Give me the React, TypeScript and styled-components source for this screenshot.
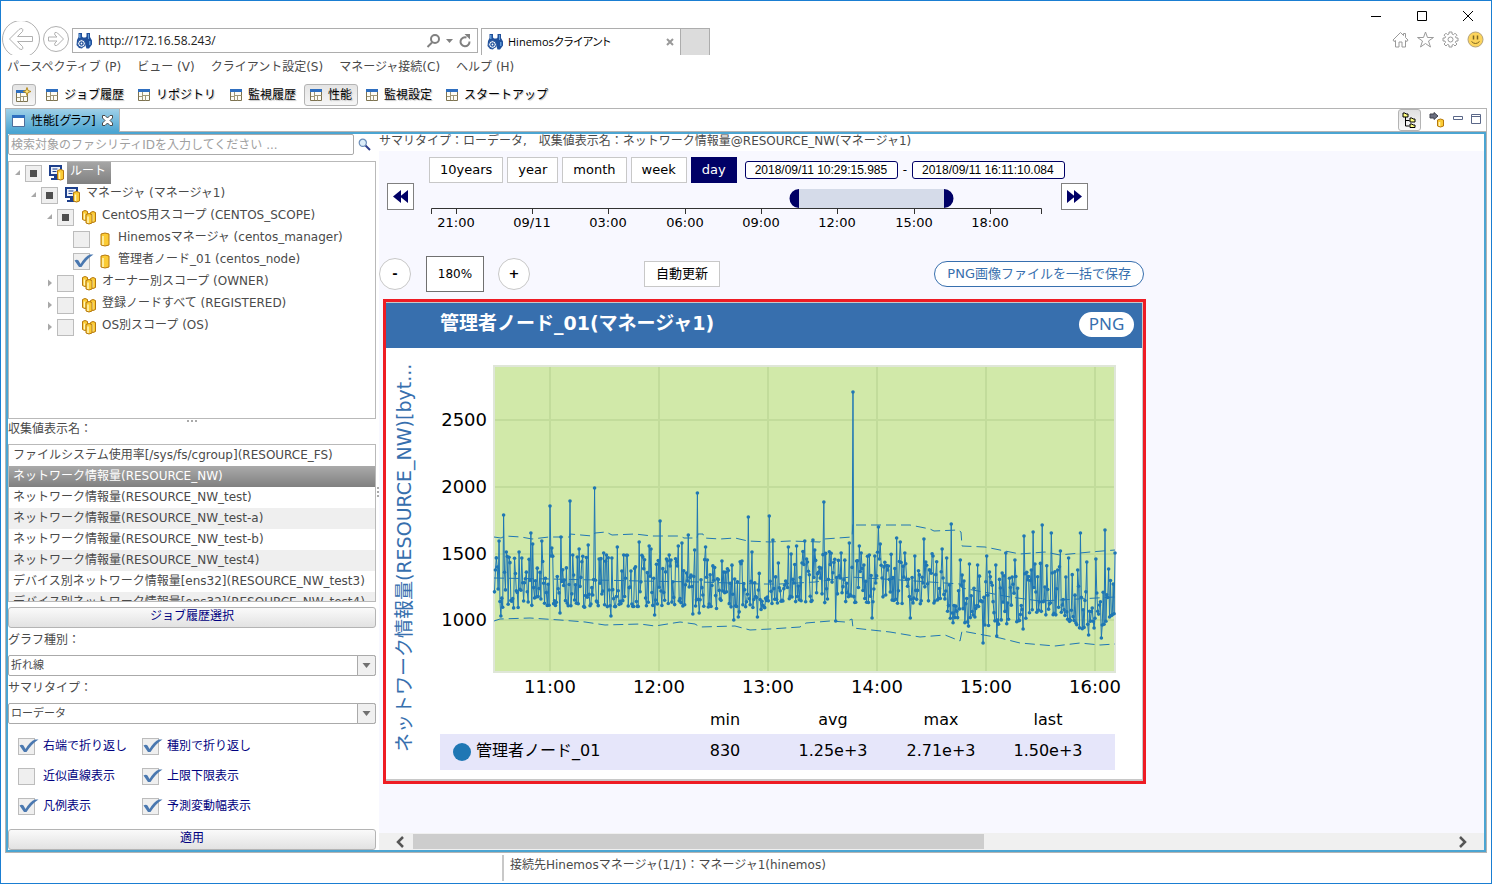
import React from "react";
import styled, { createGlobalStyle, css } from "styled-components";

const uiFont = `"DejaVu Sans", "Noto Sans CJK JP", sans-serif`;

const GlobalStyle = createGlobalStyle`
  *, *::before, *::after { box-sizing: border-box; }
  body { margin: 0; background: #fff; }
  button, input, select { font: inherit; color: inherit; margin: 0; }
  button { cursor: pointer; }
`;

const Window = styled.div`
  display: flex;
  flex-direction: column;
  min-height: 100vh;
  border: 1px solid #1a7ed2;
  background: #fff;
  font: 12px/18px ${uiFont};
  color: #4a4a4a;
`;

/* ---------- browser chrome ---------- */

const Chrome = styled.header`
  display: flex;
  justify-content: space-between;
  height: 54px;
`;

const ChromeLeft = styled.div`
  display: flex;
  align-items: flex-end;
  padding: 20px 0 0 1px;
`;

const NavButton = styled.button`
  display: block;
  padding: 0;
  border: 0;
  background: none;
  svg { display: block; }
`;

const AddressBar = styled.div`
  display: flex;
  align-items: center;
  gap: 5px;
  width: 406px;
  height: 25px;
  margin: 0 3px 2px;
  padding: 0 5px 0 3px;
  border: 1px solid #adadad;
`;

const AddressInput = styled.input`
  flex: 1;
  min-width: 0;
  padding: 0;
  border: 0;
  outline: 0;
  background: none;
  font: 12px/18px "Open Sans", sans-serif;
  color: #222;
`;

const BrowserTab = styled.div`
  display: flex;
  align-items: center;
  gap: 4px;
  width: 200px;
  height: 27px;
  padding: 0 6px 0 5px;
  border: 1px solid #adadad;
  border-bottom: 0;
  font: 11px/18px "Open Sans", "Noto Sans CJK JP", sans-serif;
  font-feature-settings: "palt";
  color: #000;
  span { flex: 1; white-space: nowrap; }
`;

const NewTab = styled.button`
  width: 30px;
  height: 27px;
  margin-left: -1px;
  border: 1px solid #adadad;
  border-bottom: 0;
  background: #dcdcdc;
`;

const ChromeRight = styled.div`
  display: flex;
  flex-direction: column;
  align-items: flex-end;
`;

const WindowButtons = styled.div`
  display: flex;
  gap: 34px;
  padding: 9px 17px 0 0;
`;

const ChromeIcons = styled.div`
  display: flex;
  gap: 8px;
  margin-top: 9px;
  padding-right: 7px;
`;

const BareButton = styled.button`
  display: flex;
  padding: 0;
  border: 0;
  background: none;
`;

/* ---------- menus ---------- */

const MenuBar = styled.nav`
  display: flex;
  gap: 16px;
  height: 24px;
  padding: 3px 6px 0;
  a { color: #4a4a4a; text-decoration: none; white-space: nowrap; }
`;

const Toolbar = styled.div`
  display: flex;
  gap: 2px;
  height: 29px;
  padding: 5px 11px 2px;
`;

const ToolButton = styled.button<{ $on?: boolean; $solo?: boolean }>`
  display: flex;
  align-items: center;
  gap: 6px;
  padding: 0 5px;
  border: 1px solid transparent;
  border-radius: 3px;
  background: none;
  color: #000;
  text-shadow: 1px 1px 1px #bbb;
  white-space: nowrap;
  ${(p) => p.$on && css`border-color: #b4b4b4; background: linear-gradient(#e4e4e4, #f6f6f6);`}
  ${(p) => p.$solo && css`width: 24px; padding: 0 3px; margin-right: 2px;`}
`;

/* ---------- part stack ---------- */

const PartStack = styled.main`
  flex: 1;
  display: flex;
  flex-direction: column;
  margin: 0 4px;
  border: 1px solid #b4b4b4;
`;

const PartTabs = styled.div`
  display: flex;
  justify-content: space-between;
  height: 23px;
  border-bottom: 1px solid #b4b4b4;
`;

const PartTab = styled.div`
  display: flex;
  align-items: center;
  gap: 6px;
  height: 23px;
  padding: 0 6px;
  border-right: 1px solid #b4b4b4;
  background: linear-gradient(#9fd0e8, #4ba5d2);
  color: #000;
  font-feature-settings: "palt";
  span { white-space: nowrap; }
`;

const PartTools = styled.div`
  display: flex;
  align-items: center;
  gap: 8px;
  padding-right: 5px;
`;

const PartTool = styled(BareButton)<{ $on?: boolean }>`
  ${(p) => p.$on && css`
    padding: 2px 3px;
    border: 1px solid #b4b4b4;
    border-radius: 3px;
    background: linear-gradient(#e0e0e0, #fafafa);
  `}
`;

const PartBody = styled.div`
  flex: 1;
  display: flex;
  border: 2px solid #4ba5d2;
`;

/* ---------- left column ---------- */

const Side = styled.section`
  flex: none;
  display: flex;
  flex-direction: column;
  width: 368px;
`;

const SearchRow = styled.div`
  display: flex;
  align-items: center;
  gap: 4px;
  margin-bottom: 6px;
`;

const SearchInput = styled.input`
  width: 346px;
  height: 21px;
  padding: 0 2px;
  border: 1px solid #aaa;
  border-radius: 2px;
  outline: 0;
  &::placeholder { color: #a0a0a0; opacity: 1; }
`;

const Tree = styled.ul`
  flex: 1;
  margin: 0;
  padding: 0;
  border: 1px solid #b9b9b9;
  list-style: none;
`;

const TreeRow = styled.li<{ $depth: number }>`
  display: flex;
  align-items: center;
  height: 22px;
  padding-left: ${(p) => p.$depth * 16 + 5}px;
  white-space: nowrap;
`;

const TreeArrow = styled.span`
  display: flex;
  width: 11px;
`;

const TreeIcon = styled.span`
  display: flex;
  width: 16px;
  margin: 0 2px 0 7px;
`;

const TreeLabel = styled.span<{ $selected?: boolean }>`
  height: 22px;
  padding: 0 5px 0 3px;
  line-height: 19px;
  ${(p) => p.$selected && css`background: linear-gradient(#a6a6a6, #808080); color: #fff;`}
`;

const CheckFrame = styled.span`
  position: relative;
  display: flex;
  width: 17px;
  height: 17px;
  flex: none;
  svg { position: absolute; left: 0; top: 0; pointer-events: none; overflow: visible; }
`;

const CheckInput = styled.input`
  appearance: none;
  width: 17px;
  height: 17px;
  border: 1px solid #bcbcbc;
  background: #efefef;
`;

const Dots = styled.div<{ $vertical?: boolean }>`
  display: flex;
  flex-direction: ${(p) => (p.$vertical ? "column" : "row")};
  align-items: center;
  justify-content: center;
  gap: 2px;
  ${(p) => (p.$vertical ? css`width: 3px;` : css`height: 3px;`)}
  i { width: 2px; height: 2px; background: #aaa; }
`;

const FieldLabel = styled.label`
  display: block;
  margin-top: 3px;
  padding-bottom: 6px;
  line-height: 18px;
`;

const ListLabel = styled.div`
  height: 22px;
  line-height: 14px;
`;

const List = styled.ul`
  height: 158px;
  margin: 0 0 5px;
  padding: 0;
  overflow: hidden;
  border: 1px solid #b9b9b9;
  list-style: none;
`;

const ListRow = styled.li<{ $selected?: boolean }>`
  height: 21px;
  padding: 1px 4px;
  line-height: 18px;
  white-space: nowrap;
  &:nth-child(even) { background: #efefef; }
  ${(p) => p.$selected && css`&&& { background: linear-gradient(#aaa, #808080); color: #fff; }`}
`;

const WideButton = styled.button`
  height: 21px;
  padding: 0 0 2px;
  border: 1px solid #b4b4b4;
  border-radius: 3px;
  background: linear-gradient(#fafafa, #e2e2e2);
  color: #000080;
  line-height: 17px;
`;

const SelectFrame = styled.div`
  position: relative;
  display: flex;
  svg {
    position: absolute;
    right: 0;
    top: 0;
    pointer-events: none;
  }
`;

const Select = styled.select`
  appearance: none;
  width: 100%;
  height: 21px;
  padding: 0 20px 0 2px;
  border: 1px solid #aaa;
  border-radius: 2px;
  background: #fff;
  font-size: 11px;
`;

const CheckGrid = styled.div`
  display: grid;
  grid-template-columns: 124px 1fr;
  grid-auto-rows: 30px;
  padding: 7px 0 8px 10px;
`;

const CheckLabel = styled.label`
  display: flex;
  align-items: center;
  gap: 8px;
  color: #000080;
  white-space: nowrap;
`;

const Sash = styled.div`
  display: flex;
  justify-content: center;
  width: 3px;
`;

/* ---------- right column ---------- */

const Content = styled.section`
  flex: 1;
  min-width: 0;
  display: flex;
  flex-direction: column;
`;

const Summary = styled.div`
  height: 17px;
  line-height: 14px;
  white-space: nowrap;
`;

const Canvas = styled.div`
  flex: 1;
  padding-top: 6px;
  background: #f8f8ff;
`;

const RangeRow = styled.div`
  display: flex;
  align-items: center;
  gap: 4px;
  padding-left: 50px;
`;

const BoxButton = styled.button<{ $on?: boolean }>`
  height: 26px;
  padding: 0 10px;
  border: 1px solid ${(p) => (p.$on ? "#000066" : "#c8c8c8")};
  background: ${(p) => (p.$on ? "#000066" : "#fff")};
  color: ${(p) => (p.$on ? "#fff" : "#000")};
  font-size: 13px;
  line-height: 18px;
  white-space: nowrap;
`;

const DateInput = styled.input`
  width: 153px;
  height: 18px;
  padding: 0 9px;
  border: 1px solid #000066;
  border-radius: 3px;
  background: #fff;
  color: #000;
  font: 12px/16px "Liberation Sans", sans-serif;
`;

const DateGroup = styled.div`
  display: flex;
  align-items: center;
  gap: 5px;
  margin-left: 4px;
  color: #000;
`;

const AxisRow = styled.div`
  display: flex;
  align-items: flex-start;
  padding-left: 8px;
`;

const StepButton = styled.button`
  display: flex;
  align-items: center;
  justify-content: center;
  width: 27px;
  height: 27px;
  padding: 0;
  border: 1px solid #808080;
  background: #fff;
`;

const ZoomRow = styled.div`
  display: flex;
  align-items: center;
  max-width: 765px;
  margin-top: 25px;
  color: #000;
`;

const RoundButton = styled.button`
  width: 32px;
  height: 32px;
  padding: 0;
  border: 1px solid #c8c8c8;
  border-radius: 50%;
  background: #fff;
  color: #000;
  font-size: 13px;
  font-weight: bold;
`;

const ZoomValue = styled.output`
  width: 58px;
  margin: 0 14px 0 15px;
  border: 1px solid #707070;
  background: #fff;
  line-height: 34px;
  text-align: center;
`;

const AutoSlot = styled.div`
  flex: 1;
  padding-left: 114px;
`;

const AutoButton = styled(BoxButton)`
  padding: 0 11px;
`;

const SaveButton = styled(BoxButton)`
  padding: 0 12px;
  border-color: #376fae;
  border-radius: 13px;
  color: #376fae;
`;

const Card = styled.article`
  max-width: 763px;
  margin: 7px 0 0 4px;
  border: 3px solid #ee1c24;
`;

const CardInner = styled.div`
  border: solid #c8c8c8;
  border-width: 1px 1px 2px 0;
  background: #fff;
`;

const CardHead = styled.header`
  display: flex;
  align-items: center;
  justify-content: space-between;
  height: 45px;
  padding: 0 8px 2px 54px;
  background: #376fae;
  color: #fff;
`;

const CardTitle = styled.h2`
  margin: 0;
  padding-bottom: 4px;
  font-size: 19px;
  line-height: 24px;
`;

const PngButton = styled.button`
  width: 55px;
  height: 25px;
  padding: 0 0 2px;
  border: 0;
  border-radius: 13px;
  background: #fff;
  color: #376fae;
  font: 17px/22px "Noto Sans", sans-serif;
`;

const CardBody = styled.div`
  display: grid;
  grid-template-columns: 54px minmax(0, 1fr);
  padding-bottom: 9px;
`;

const AxisTitle = styled.div`
  justify-self: center;
  padding: 18px 0 0 18px;
  writing-mode: vertical-rl;
  text-orientation: sideways;
  transform: rotate(180deg);
  font-size: 19px;
  line-height: 20px;
  color: #376fae;
  white-space: nowrap;
`;

const ChartSvg = styled.svg`
  display: block;
  width: 100%;
  font-size: 18px;
`;

const Legend = styled.table`
  width: calc(100% - 27px);
  border-collapse: collapse;
  table-layout: fixed;
  color: #000;
  font-size: 16px;
  th, td { padding: 0; font-weight: normal; text-align: center; }
  thead th { height: 29px; line-height: 24px; }
  thead th:not(:first-child) { width: 108px; }
  thead th:last-child { width: 120px; }
  th:last-child, td:last-child { padding-right: 14px; }
  tbody tr { background: #e6e6fa; }
  tbody th, tbody td { height: 36px; line-height: 24px; padding-bottom: 2px; }
  tbody th { text-align: left; }
`;

const SeriesName = styled.span`
  display: flex;
  align-items: center;
  gap: 5px;
  padding-left: 13px;
  white-space: nowrap;
  &::before {
    content: "";
    width: 18px;
    height: 18px;
    margin-top: 2px;
    border-radius: 50%;
    background: #1f77b4;
  }
`;

const ScrollBar = styled.div`
  display: flex;
  align-items: center;
  height: 17px;
  padding: 0 14px 0 13px;
  background: #f0f0f0;
`;

const ScrollTrack = styled.div`
  flex: 1;
  margin: 0 2px 0 5px;
`;

const ScrollThumb = styled.div`
  width: 55%;
  height: 15px;
  background: #cdcdcd;
`;

const Status = styled.footer`
  display: flex;
  height: 30px;
  padding: 2px 0;
`;

const StatusText = styled.div`
  margin-left: 501px;
  padding-left: 6px;
  border-left: 2px solid #c8c8c8;
  line-height: 20px;
`;

/* ---------- icons ---------- */

const Binoculars = () => (
  <svg width="17" height="18" viewBox="0 0 17 18">
    <path d="M2.500 1h3.500v3.500l1 1h2.500l1-1V1H14v4l2 3.500v4l-3 4h-2.500L9 12 6 16.500 3 16 .5 13 1 8l1.500-3z" fill="#20509b" />
    <path d="M3 2h1.500v4H3zM12 2h1v5h-1zM13 9h1.500v4H13z" fill="#5f9ad8" />
    <circle cx="5.500" cy="11.500" r="3.800" fill="#fff" stroke="#20509b" />
    <circle cx="5.500" cy="11.500" r="1.600" fill="none" stroke="#20509b" strokeWidth="1.400" />
  </svg>
);

const BackIcon = () => (
  <svg width="39" height="34" viewBox="0 0 39 34" fill="none" stroke="#b0b0b0">
    <circle cx="19" cy="18" r="18.500" />
    <path d="M7.500 18 17 8.500q1-1 3-1 1.500 1 .5 3L15.500 15.500H30.500v5H15.500L20.500 25.500q1 2-.5 3-2 0-3-1z" />
  </svg>
);

const ForwardIcon = () => (
  <svg width="28" height="34" viewBox="0 0 28 34" fill="none" stroke="#b0b0b0">
    <circle cx="15" cy="18" r="12.500" />
    <path d="M22.500 18 16.500 12q-1-.8-2.500-.500-.8 1.500 0 2.500l2 2H7.500v4H16l-2 2q-.8 1 0 2.500 1.500.3 2.500-.5z" />
  </svg>
);

const PerspectiveIcon = ({ plus }: { plus?: boolean }) => (
  <svg width={plus ? 16 : 12} height={plus ? 16 : 12} viewBox={plus ? "0 -3 16 16" : "0 0 12 12"}>
    <path d="M.5.500h11v11H.5z" fill="#fdfcf4" stroke="#7d7350" />
    <path d="M0 0h12v3H0z" fill="#2f6fc0" />
    <path d="M4.500 3v8M4.500 6.500h7M7.500 6.500v5M1 7.500h3" fill="none" stroke="#a09878" />
    {plus && <path d="M11-2.500 12 .5l3 1.000-3 1.000-1 3-1-3-3-1.000 3-1.000z" fill="#ffe680" stroke="#b58a1c" />}
  </svg>
);

const ViewIcon = () => (
  <svg width="13" height="12" viewBox="0 0 13 12">
    <path d="M.5.500h12v11H.5z" fill="#fff" stroke="#4f6f9b" />
    <path d="M0 0h13v3H0z" fill="#2f6fc0" />
  </svg>
);

const CloseView = () => (
  <svg width="11" height="11" viewBox="0 0 11 11">
    <path d="M.5.500h2.500L5.500 3 8 .5h2.500V3L8 5.500 10.500 8v2.500H8L5.500 8 3 10.500H.5V8L3 5.500.5 3z" fill="#fff" stroke="#4a4a4a" />
  </svg>
);

const Drum = ({ x, y, w = 7, h = 11 }: { x: number; y: number; w?: number; h?: number }) => (
  <g stroke="#b5780e">
    <path d={`M${x} ${y}q${w / 2} -2 ${w} 0v${h}q${-w / 2} 2 ${-w} 0z`} fill="#fbcb34" />
    <path d={`M${x + 2} ${y + 2}v${h - 2}`} stroke="#fff6bc" strokeWidth="1.500" />
  </g>
);

const NodeIcon = ({ kind }: { kind: string }) => (
  <svg width="16" height="16" viewBox="0 0 16 16">
    {kind === "root" && (
      <>
        <path d="M1 1h11v9H1z" fill="#eef3fb" stroke="#1d3f8c" strokeWidth="2" />
        <path d="M3.500 4h5M3.500 6.500h4" stroke="#1d3f8c" />
        <path d="M5 11h3v2H5zM2 13h9v2H2z" fill="#1d3f8c" />
        <Drum x={8.5} y={5.5} w={6} h={8.5} />
      </>
    )}
    {kind === "scope" && (
      <>
        <Drum x={1.5} y={2.5} w={5} h={8} />
        <Drum x={9.5} y={3.5} w={5} h={9} />
        <Drum x={5} y={5.5} w={6} h={8.5} />
      </>
    )}
    {kind === "node" && <Drum x={4} y={3} w={8} h={11} />}
  </svg>
);

const Magnifier = () => (
  <svg width="13" height="13" viewBox="0 0 13 13">
    <path d="M7 7l5 5" stroke="#2d3e8c" strokeWidth="2" />
    <circle cx="4.800" cy="4.800" r="3.600" fill="#dcedf9" stroke="#6a8db8" strokeWidth="1.200" />
  </svg>
);

const Arrow = ({ open }: { open: boolean }) => (
  <svg width="7" height="8" viewBox="0 0 7 8">
    <path d={open ? "M6 1v5H1z" : "M2 0.500v7L6 4z"} fill="#a8a8a8" />
  </svg>
);

const SelectArrow = () => (
  <svg width="19" height="21" viewBox="0 0 19 21">
    <path d="M.5.500h16q2 0 2 2v16q0 2-2 2H.5z" fill="#f0f0f0" stroke="#aaa" />
    <path d="M5.500 8h8L9.500 13z" fill="#707070" />
  </svg>
);

type Mark = "none" | "check" | "mixed";

const Check = ({ mark, label }: { mark: Mark; label?: string }) => (
  <CheckFrame>
    <CheckInput type="checkbox" defaultChecked={mark === "check"} aria-label={label} />
    <svg width="20" height="17" viewBox="0 0 20 17">
      {mark === "check" && <path d="M1.500 7.500Q4 6 5.500 7.500L7.500 11Q12 3.500 17 1.500H20.500Q14 5.500 8.500 14H6z" fill="#4a78b0" />}
      {mark === "mixed" && <path d="M5 5h7v7H5z" fill="#4f4f4f" />}
    </svg>
  </CheckFrame>
);

/* ---------- data ---------- */

const menus = ["パースペクティブ (P)", "ビュー (V)", "クライアント設定(S)", "マネージャ接続(C)", "ヘルプ (H)"];
const perspectives = ["ジョブ履歴", "リポジトリ", "監視履歴", "性能", "監視設定", "スタートアップ"];

const nodes: { depth: number; open?: boolean; mark: Mark; kind: string; text: string }[] = [
  { depth: 0, open: true, mark: "mixed", kind: "root", text: "ルート" },
  { depth: 1, open: true, mark: "mixed", kind: "root", text: "マネージャ (マネージャ1)" },
  { depth: 2, open: true, mark: "mixed", kind: "scope", text: "CentOS用スコープ (CENTOS_SCOPE)" },
  { depth: 3, mark: "none", kind: "node", text: "Hinemosマネージャ (centos_manager)" },
  { depth: 3, mark: "check", kind: "node", text: "管理者ノード_01 (centos_node)" },
  { depth: 2, open: false, mark: "none", kind: "scope", text: "オーナー別スコープ (OWNER)" },
  { depth: 2, open: false, mark: "none", kind: "scope", text: "登録ノードすべて (REGISTERED)" },
  { depth: 2, open: false, mark: "none", kind: "scope", text: "OS別スコープ (OS)" },
];

const items = [
  "ファイルシステム使用率[/sys/fs/cgroup](RESOURCE_FS)",
  "ネットワーク情報量(RESOURCE_NW)",
  "ネットワーク情報量(RESOURCE_NW_test)",
  "ネットワーク情報量(RESOURCE_NW_test-a)",
  "ネットワーク情報量(RESOURCE_NW_test-b)",
  "ネットワーク情報量(RESOURCE_NW_test4)",
  "デバイス別ネットワーク情報量[ens32](RESOURCE_NW_test3)",
  "デバイス別ネットワーク情報量[ens32](RESOURCE_NW_test4)",
];

const options: [string, Mark][] = [
  ["右端で折り返し", "check"],
  ["種別で折り返し", "check"],
  ["近似直線表示", "none"],
  ["上限下限表示", "check"],
  ["凡例表示", "check"],
  ["予測変動幅表示", "check"],
];

const timeTicks: [number, string][] = [
  [42, "21:00"], [118, "09/11"], [194, "03:00"], [271, "06:00"],
  [347, "09:00"], [423, "12:00"], [500, "15:00"], [576, "18:00"],
];

/* lower edge of the sampled values along the x axis */
const floorLine = [
  [494, 594], [503, 602], [700, 600], [740, 606], [760, 604], [780, 596], [850, 597], [940, 598],
  [953, 620], [1015, 621], [1030, 609], [1060, 609], [1080, 623], [1100, 623], [1115, 608],
];

const extremes = [
  [499, 541], [501, 616], [504, 515], [506, 552], [519, 552], [522, 558], [531, 533], [533, 544], [542, 541], [550, 506],
  [552, 548], [560, 613], [561, 537], [570, 501], [573, 555], [579, 549], [588, 545], [595, 488], [604, 553], [611, 616],
  [617, 547], [624, 555], [639, 542], [649, 546], [651, 549], [655, 615], [660, 521], [669, 555], [678, 546], [682, 543],
  [688, 535], [693, 614], [695, 550], [697, 493], [699, 613], [706, 547], [722, 561], [734, 620], [738, 617], [742, 561],
  [748, 517], [752, 552], [757, 617], [769, 516], [773, 540], [778, 563], [788, 547], [791, 554], [797, 546], [805, 541],
  [813, 540], [815, 550], [824, 502], [836, 621], [841, 553], [849, 543], [853, 392], [859, 546], [869, 555], [872, 618],
  [875, 556], [878, 527], [880, 544], [888, 566], [897, 538], [900, 542], [905, 553], [910, 618], [915, 556], [924, 539],
  [926, 562], [933, 556], [942, 549], [947, 558], [951, 524], [960, 560], [969, 564], [978, 565], [983, 643], [987, 556],
  [989, 572], [996, 565], [997, 636], [1002, 573], [1006, 553], [1012, 577], [1015, 560], [1023, 629], [1024, 536],
  [1033, 532], [1035, 564], [1042, 525], [1051, 533], [1058, 570], [1060, 551], [1069, 558], [1078, 570], [1080, 533],
  [1087, 562], [1089, 635], [1096, 559], [1101, 638], [1105, 530], [1113, 584], [1115, 553],
];

/* one sample every thirty seconds */
const sampleCount = 683;
const sampleStep = 620.5 / (sampleCount - 1);

const samples = (() => {
  let seed = 20180911;
  const random = () => {
    seed = (seed * 1103515245 + 12345) % 2147483648;
    return seed / 2147483648;
  };
  const points: number[][] = [];
  for (let i = 0; i < sampleCount; i++) {
    const x = 494.5 + i * sampleStep;
    let k = 0;
    while (k < floorLine.length - 2 && floorLine[k + 1][0] < x) k++;
    const [x0, y0] = floorLine[k];
    const [x1, y1] = floorLine[k + 1];
    const base = y0 + ((x - x0) / (x1 - x0)) * (y1 - y0);
    points.push([x, base + 6 - Math.pow(random(), 1.5) * 52]);
  }
  extremes.forEach(([x, y]) => {
    const i = Math.min(sampleCount - 1, Math.max(0, Math.round((x - 494.5) / sampleStep)));
    points[i] = [points[i][0], y];
  });
  return points;
})();

const upperBand =
  "494,537 501,538 505,536 521,537 532,539 549,537 570,537 570,534 592,536 595,533 606,532 612,535 635,534 652,536 680,536 684,538 697,538 698,534 703,534 704,538 720,539 735,538 748,541 770,542 790,541 820,542 824,539 852,537 853,523 856,525 910,525 930,529 934,531 958,530 961,532 962,546 985,547 1000,550 1020,554 1045,552 1060,555 1090,552 1115,550";
const forecast =
  "494,578 550,579 640,581 700,582 760,584 780,584 815,582 850,577 900,580 960,584 962,588 1010,597 1040,601 1060,600 1115,597";
const lowerBand =
  "494,621 500,619 530,618 545,619 560,620 585,622 605,625 640,624 655,626 680,622 695,624 700,627 735,626 750,630 770,629 800,627 806,623 830,621 845,622 852,619 853,628 890,632 920,637 945,635 960,641 962,631 1000,638 1020,643 1055,646 1080,643 1100,645 1115,644";

const Chart = () => (
  <ChartSvg viewBox="440 348 702 357" role="img" aria-label="ネットワーク情報量">
    <rect x="494" y="366" width="621" height="306" fill="#d1e9a9" stroke="#dfe6d8" strokeWidth="2" />
    <g stroke="#c2dc9b" strokeWidth="2">
      {[550, 659, 768, 877, 986, 1095].map((x) => <path key={x} d={`M${x} 367V671`} />)}
      {[420, 487, 554, 620].map((y) => <path key={y} d={`M495 ${y}H1114`} />)}
    </g>
    <g fill="none" stroke="#1f77b4">
      <polyline points={upperBand} strokeDasharray="10 5" />
      <polyline points={forecast} strokeDasharray="10 5" />
      <polyline points={lowerBand} strokeDasharray="10 5" />
      <polyline points={samples.map((p) => p.join(",")).join(" ")} />
    </g>
    <g fill="#1f77b4">
      {samples.map(([x, y]) => <circle key={x} cx={x} cy={y} r="1.800" />)}
    </g>
    <g fill="#000" textAnchor="middle">
      {["11:00", "12:00", "13:00", "14:00", "15:00", "16:00"].map((t, i) => (
        <text key={t} x={550 + i * 109} y="693">{t}</text>
      ))}
    </g>
    <g fill="#000" textAnchor="end">
      <text x="487" y="426">2500</text>
      <text x="487" y="493">2000</text>
      <text x="487" y="560">1500</text>
      <text x="487" y="626">1000</text>
    </g>
  </ChartSvg>
);

const TimeAxis = () => (
  <svg width="647" height="48" viewBox="0 0 647 48" fontSize="13">
    <path d="M385 6h145v19H385z" fill="#d5dbe9" />
    <path d="M17.500 31V25.500H627.500V31" fill="none" stroke="#333" />
    {timeTicks.map(([x, t]) => (
      <g key={t}>
        <path d={`M${x + 0.5} 25v6`} stroke="#333" />
        <text x={x} y="44" textAnchor="middle" fill="#000">{t}</text>
      </g>
    ))}
    <path d="M385 6v19a9.500 9.500 0 0 1 0-19zM530 6v19a9.500 9.500 0 0 0 0-19z" fill="#000066" />
  </svg>
);

export default function App() {
  return (
    <>
      <GlobalStyle />
      <Window>
        <Chrome>
          <ChromeLeft>
            <NavButton aria-label="戻る"><BackIcon /></NavButton>
            <NavButton aria-label="進む"><ForwardIcon /></NavButton>
            <AddressBar>
              <Binoculars />
              <AddressInput aria-label="アドレス" defaultValue="http://172.16.58.243/" />
              <svg width="47" height="16" viewBox="0 0 47 16" fill="none" stroke="#808080" strokeWidth="2">
                <circle cx="10" cy="6" r="4" />
                <path d="M7 9.500 2.500 14" />
                <path d="M21 6h7l-3.500 4z" fill="#808080" stroke="none" />
                <path d="M44.500 8.500a4.500 4.500 0 1 1-3-4" />
                <path d="M39.500 1l5.500 0v5.500z" fill="#808080" stroke="none" />
              </svg>
            </AddressBar>
            <BrowserTab>
              <Binoculars />
              <span>Hinemosクライアント</span>
              <BareButton aria-label="タブを閉じる">
                <svg width="8" height="8" viewBox="0 0 8 8"><path d="M1 1l6 6M7 1 1 7" stroke="#999" strokeWidth="2" /></svg>
              </BareButton>
            </BrowserTab>
            <NewTab aria-label="新しいタブ" />
          </ChromeLeft>
          <ChromeRight>
            <WindowButtons>
              <BareButton aria-label="最小化">
                <svg width="12" height="12"><path d="M1 6.500h10" stroke="#000" /></svg>
              </BareButton>
              <BareButton aria-label="最大化">
                <svg width="12" height="12"><path d="M1.500 1.500h9v9h-9z" fill="none" stroke="#000" /></svg>
              </BareButton>
              <BareButton aria-label="閉じる">
                <svg width="12" height="12"><path d="M1 1l10 10M11 1 1 11" stroke="#000" /></svg>
              </BareButton>
            </WindowButtons>
            <ChromeIcons>
              <BareButton aria-label="ホーム">
                <svg width="17" height="17" viewBox="0 0 17 17" fill="none" stroke="#9a9a9a">
                  <path d="M1 9 8.500 1.500l3 3V2.500h2v4L16 9l-1 1.500-1.500-1v6.500h-3.500v-5H7v5H3.500V9.500l-1.500 1z" />
                </svg>
              </BareButton>
              <BareButton aria-label="お気に入り">
                <svg width="17" height="17" viewBox="0 0 17 17" fill="none" stroke="#9a9a9a">
                  <path d="M8.500 1l2 5.500h6l-5 3.500 2 6-5-3.500-5 3.500 2-6L.5 6.500h6z" />
                </svg>
              </BareButton>
              <BareButton aria-label="ツール">
                <svg width="17" height="17" viewBox="0 0 17 17" fill="none" stroke="#9a9a9a">
                  <path d="M7 1h3v2l1.500.7L13 2.200 15 4.200l-1.500 1.500.6 1.300H16v3h-2l-.6 1.500L15 13l-2 2-1.500-1.500-1.500.6V16H7v-2l-1.500-.6L4 15l-2-2 1.500-1.500L3 10H1V7h2l.6-1.300L2 4.200l2-2 1.500 1.500L7 3z" />
                  <circle cx="8.500" cy="8.500" r="2.500" />
                </svg>
              </BareButton>
              <BareButton aria-label="スマイル">
                <svg width="17" height="17" viewBox="0 0 17 17">
                  <circle cx="8.500" cy="8.500" r="7.500" fill="#fcd45c" stroke="#b4a27a" />
                  <path d="M6.500 4.500v4M10.500 4.500v4" stroke="#7b6420" strokeWidth="1.500" />
                  <path d="M4.500 10.500q4 4 8 0" fill="none" stroke="#7b6420" />
                </svg>
              </BareButton>
            </ChromeIcons>
          </ChromeRight>
        </Chrome>

        <MenuBar>
          {menus.map((m) => <a key={m} href="#menu">{m}</a>)}
        </MenuBar>

        <Toolbar>
          <ToolButton $on $solo aria-label="パースペクティブを開く"><PerspectiveIcon plus /></ToolButton>
          {perspectives.map((p) => (
            <ToolButton key={p} $on={p === "性能"}><PerspectiveIcon />{p}</ToolButton>
          ))}
        </Toolbar>

        <PartStack>
          <PartTabs>
            <PartTab>
              <ViewIcon />
              <span>性能[グラフ]</span>
              <BareButton aria-label="ビューを閉じる"><CloseView /></BareButton>
            </PartTab>
            <PartTools>
              <PartTool $on aria-label="ツリー表示">
                <svg width="15" height="16" viewBox="0 0 15 16">
                  <path d="M3.500 5v9h4M3.500 8.500h4" fill="none" stroke="#000" />
                  <path d="M1 1h2l1 1h2v3H1zM8 6h2l1 1h2v3H8zM8 12h2l1 1h2v2.500H8z" fill="#ffff80" stroke="#000" />
                </svg>
              </PartTool>
              <PartTool aria-label="適用対象">
                <svg width="16" height="16" viewBox="0 0 16 16">
                  <path d="M1 2h4V.5l4 3.500-4 3.500V6H1z" fill="#6b6f80" stroke="#40434f" />
                  <Drum x={8.5} y={8} w={6} h={6} />
                </svg>
              </PartTool>
              <PartTool aria-label="ビューを最小化">
                <svg width="10" height="16"><path d="M.5 4.500h9v3h-9z" fill="#fff" stroke="#5a6788" /></svg>
              </PartTool>
              <PartTool aria-label="ビューを最大化">
                <svg width="10" height="12"><path d="M.5.500h9v9h-9zM.5 2.500h9" fill="#fff" stroke="#5a6788" /></svg>
              </PartTool>
            </PartTools>
          </PartTabs>

          <PartBody>
            <Side>
              <SearchRow>
                <SearchInput aria-label="ファシリティID" placeholder="検索対象のファシリティIDを入力してください ..." />
                <BareButton aria-label="検索"><Magnifier /></BareButton>
              </SearchRow>

              <Tree>
                {nodes.map((n, i) => (
                  <TreeRow key={n.text} $depth={n.depth}>
                    <TreeArrow>{n.open !== undefined && <Arrow open={n.open} />}</TreeArrow>
                    <Check mark={n.mark} label={n.text} />
                    <TreeIcon><NodeIcon kind={n.kind} /></TreeIcon>
                    <TreeLabel $selected={i === 0}>{n.text}</TreeLabel>
                  </TreeRow>
                ))}
              </Tree>
              <Dots><i /><i /><i /></Dots>

              <ListLabel id="items-label">収集値表示名：</ListLabel>
              <List aria-labelledby="items-label">
                {items.map((t, i) => <ListRow key={t} $selected={i === 1}>{t}</ListRow>)}
              </List>
              <WideButton>ジョブ履歴選択</WideButton>

              <FieldLabel htmlFor="graph-kind">グラフ種別：</FieldLabel>
              <SelectFrame>
                <Select id="graph-kind"><option>折れ線</option></Select>
                <SelectArrow />
              </SelectFrame>
              <FieldLabel htmlFor="summary-kind">サマリタイプ：</FieldLabel>
              <SelectFrame>
                <Select id="summary-kind"><option>ローデータ</option></Select>
                <SelectArrow />
              </SelectFrame>

              <CheckGrid>
                {options.map(([t, mark]) => (
                  <CheckLabel key={t}><Check mark={mark} />{t}</CheckLabel>
                ))}
              </CheckGrid>
              <WideButton>適用</WideButton>
            </Side>

            <Sash><Dots $vertical><i /><i /><i /></Dots></Sash>

            <Content>
              <Summary>サマリタイプ：ローデータ,　収集値表示名：ネットワーク情報量@RESOURCE_NW(マネージャ1)</Summary>
              <Canvas>
                <RangeRow>
                  {["10years", "year", "month", "week", "day"].map((r) => (
                    <BoxButton key={r} $on={r === "day"}>{r}</BoxButton>
                  ))}
                  <DateGroup>
                    <DateInput aria-label="開始" defaultValue="2018/09/11 10:29:15.985" />
                    <span>-</span>
                    <DateInput aria-label="終了" defaultValue="2018/09/11 16:11:10.084" />
                  </DateGroup>
                </RangeRow>
                <AxisRow>
                  <StepButton aria-label="前へ">
                    <svg width="15" height="13"><path d="M8 0v13L0 6.500zM15 0v13L7 6.500z" fill="#000066" /></svg>
                  </StepButton>
                  <TimeAxis />
                  <StepButton aria-label="次へ">
                    <svg width="15" height="13"><path d="M0 0v13l8-6.500zM7 0v13L15 6.500z" fill="#000066" /></svg>
                  </StepButton>
                </AxisRow>
                <ZoomRow>
                  <RoundButton>-</RoundButton>
                  <ZoomValue>180%</ZoomValue>
                  <RoundButton>+</RoundButton>
                  <AutoSlot><AutoButton>自動更新</AutoButton></AutoSlot>
                  <SaveButton>PNG画像ファイルを一括で保存</SaveButton>
                </ZoomRow>

                <Card>
                  <CardInner>
                    <CardHead>
                      <CardTitle>管理者ノード_01(マネージャ1)</CardTitle>
                      <PngButton>PNG</PngButton>
                    </CardHead>
                    <CardBody>
                      <AxisTitle>ネットワーク情報量(RESOURCE_NW)[byt...</AxisTitle>
                      <div>
                        <Chart />
                        <Legend>
                          <thead>
                            <tr><th /><th>min</th><th>avg</th><th>max</th><th>last</th></tr>
                          </thead>
                          <tbody>
                            <tr>
                              <th scope="row"><SeriesName>管理者ノード_01</SeriesName></th>
                              <td>830</td><td>1.25e+3</td><td>2.71e+3</td><td>1.50e+3</td>
                            </tr>
                          </tbody>
                        </Legend>
                      </div>
                    </CardBody>
                  </CardInner>
                </Card>
              </Canvas>
              <ScrollBar>
                <svg width="16" height="12" viewBox="0 0 16 12"><path d="M11 1 6 6l5 5" fill="none" stroke="#555" strokeWidth="2.500" /></svg>
                <ScrollTrack><ScrollThumb /></ScrollTrack>
                <svg width="16" height="12" viewBox="0 0 16 12"><path d="M6 1l5 5-5 5" fill="none" stroke="#555" strokeWidth="2.500" /></svg>
              </ScrollBar>
            </Content>
          </PartBody>
        </PartStack>

        <Status>
          <StatusText>接続先Hinemosマネージャ(1/1)：マネージャ1(hinemos)</StatusText>
        </Status>
      </Window>
    </>
  );
}
